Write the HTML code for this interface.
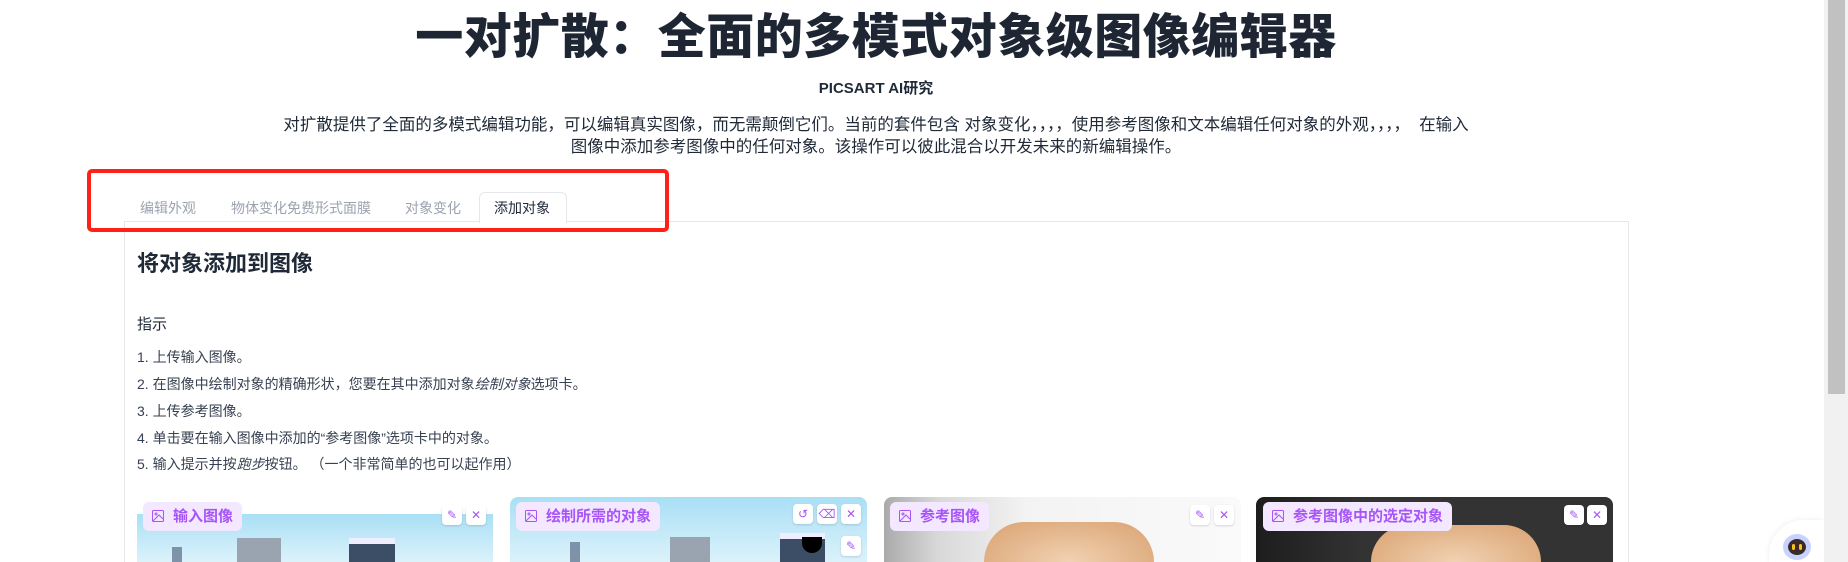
<!DOCTYPE html>
<html style="width:1848px;height:562px;overflow:hidden"><head><meta charset="utf-8"><style>
*{margin:0;padding:0;box-sizing:border-box}
body{width:1848px;height:562px;overflow:hidden;background:#fff;font-family:"Liberation Sans","Noto Sans CJK SC",sans-serif;position:relative;color:#1f2937}
.a{position:absolute;white-space:nowrap}
h1{position:absolute;left:0;width:1752px;top:8px;text-align:center;font-size:48px;font-weight:900;color:#1e2533;line-height:60px;letter-spacing:0.5px}
.sub{left:0;width:1752px;top:77px;text-align:center;font-size:15px;font-weight:700;color:#1f2937}
.desc{left:0;width:1752px;top:114px;text-align:center;font-size:16.5px;line-height:22px;color:#1f2937}
.red{position:absolute;left:87px;top:169px;width:582px;height:63px;border:4px solid #ff2117;border-radius:5px}
.tab{top:198px;font-size:14px;color:#9ca3af}
.act{position:absolute;left:479px;top:192px;width:88px;height:31px;border:1px solid #e5e7eb;border-bottom:none;border-radius:6px 6px 0 0;background:#fff}
.panel{position:absolute;left:124px;top:221px;width:1505px;height:341px;border:1px solid #e5e7eb;border-bottom:none}
.li{left:137px;font-size:14px;color:#374151}
.card{position:absolute;top:497px;width:357px;height:65px;border-radius:8px 8px 0 0;overflow:hidden}
.lab{position:absolute;top:502px;height:29px;background:#f3e8ff;border-radius:6px;color:#a855f7;font-size:15px;font-weight:700;line-height:29px;padding:0 9px 0 30px;white-space:nowrap}
.lab svg{position:absolute;left:9px;top:8px}
.btn{position:absolute;width:20px;height:20px;background:#fff;border-radius:4px;box-shadow:0 1px 2px rgba(0,0,0,.15);color:#a855f7;font-size:12px;text-align:center;line-height:20px}
</style></head><body>
<h1>一对扩散：全面的多模式对象级图像编辑器</h1>
<div class="a sub">PICSART AI研究</div>
<div class="a desc">对扩散提供了全面的多模式编辑功能，可以编辑真实图像，而无需颠倒它们。当前的套件包含 对象变化，，，，使用参考图像和文本编辑任何对象的外观，，，， &nbsp;在输入<br>图像中添加参考图像中的任何对象。该操作可以彼此混合以开发未来的新编辑操作。</div>
<div class="panel"></div>
<div class="act"></div>
<div class="a tab" style="left:140px">编辑外观</div>
<div class="a tab" style="left:231px">物体变化免费形式面膜</div>
<div class="a tab" style="left:405px">对象变化</div>
<div class="a tab" style="left:494px;color:#1f2937">添加对象</div>
<div class="red"></div>
<div class="a" style="left:137px;top:246px;font-size:22px;font-weight:700;color:#1f2937">将对象添加到图像</div>
<div class="a" style="left:137px;top:313px;font-size:15px;color:#1f2937">指示</div>
<div class="a li" style="top:347px">1. 上传输入图像。</div>
<div class="a li" style="top:374px">2. 在图像中绘制对象的精确形状，您要在其中添加对象<i>绘制对象</i>选项卡。</div>
<div class="a li" style="top:401px">3. 上传参考图像。</div>
<div class="a li" style="top:428px">4. 单击要在输入图像中添加的“参考图像”选项卡中的对象。</div>
<div class="a li" style="top:454px">5. 输入提示并按<i>跑步</i>按钮。 （一个非常简单的也可以起作用）</div>

<div class="card" style="left:137px;background:#fff"><div style="position:absolute;left:0;top:17px;width:356px;height:48px;background:linear-gradient(#a9dff5,#dcf2fb);overflow:hidden"><div style="position:absolute;left:100px;top:24px;width:44px;height:24px;background:#9aa4b0"></div><div style="position:absolute;left:212px;top:24px;width:46px;height:24px;background:#3b4e66;border-top:6px solid #eef"></div><div style="position:absolute;left:35px;top:33px;width:10px;height:15px;background:#7f93a8"></div></div></div>
<div class="card" style="left:510px;background:linear-gradient(#a9dff5,#dcf2fb)"><div style="position:absolute;left:160px;top:40px;width:40px;height:25px;background:#9aa4b0"></div><div style="position:absolute;left:270px;top:36px;width:45px;height:29px;background:#3b4e66;border-top:6px solid #eef"></div><div style="position:absolute;left:60px;top:45px;width:10px;height:20px;background:#7f93a8"></div><div style="position:absolute;left:292px;top:40px;width:20px;height:16px;background:#000;border-radius:0 0 10px 10px"></div></div>
<div class="card" style="left:884px;background:linear-gradient(90deg,#aaa 0%,#d8d8d8 15%,#f3f3f3 40%,#fafafa 100%)"><div style="position:absolute;left:100px;top:25px;width:170px;height:40px;border-radius:85px 85px 0 0;background:radial-gradient(ellipse at 50% 100%,#f1d2b2,#d9a170)"></div></div>
<div class="card" style="left:1256px;background:linear-gradient(90deg,#1d1d1d,#333 30%,#333)"><div style="position:absolute;left:115px;top:28px;width:170px;height:37px;border-radius:85px 85px 0 0;background:radial-gradient(ellipse at 50% 100%,#f1d2b2,#d9a170)"></div></div>

<div class="lab" style="left:143px"><svg width="12" height="12" viewBox="0 0 12 12" fill="none" stroke="#a855f7"><rect x=".5" y=".5" width="11" height="11" rx="1"/><circle cx="4" cy="4" r="1"/><path d="M1 11l6-6 4 4"/></svg>输入图像</div>
<div class="lab" style="left:516px"><svg width="12" height="12" viewBox="0 0 12 12" fill="none" stroke="#a855f7"><rect x=".5" y=".5" width="11" height="11" rx="1"/><circle cx="4" cy="4" r="1"/><path d="M1 11l6-6 4 4"/></svg>绘制所需的对象</div>
<div class="lab" style="left:890px"><svg width="12" height="12" viewBox="0 0 12 12" fill="none" stroke="#a855f7"><rect x=".5" y=".5" width="11" height="11" rx="1"/><circle cx="4" cy="4" r="1"/><path d="M1 11l6-6 4 4"/></svg>参考图像</div>
<div class="lab" style="left:1263px"><svg width="12" height="12" viewBox="0 0 12 12" fill="none" stroke="#a855f7"><rect x=".5" y=".5" width="11" height="11" rx="1"/><circle cx="4" cy="4" r="1"/><path d="M1 11l6-6 4 4"/></svg>参考图像中的选定对象</div>

<div class="btn" style="left:442px;top:505px">✎</div><div class="btn" style="left:466px;top:505px">✕</div>
<div class="btn" style="left:793px;top:504px">↺</div><div class="btn" style="left:817px;top:504px">⌫</div><div class="btn" style="left:841px;top:504px">✕</div><div class="btn" style="left:841px;top:536px">✎</div>
<div class="btn" style="left:1190px;top:505px">✎</div><div class="btn" style="left:1214px;top:505px">✕</div>
<div class="btn" style="left:1564px;top:505px">✎</div><div class="btn" style="left:1587px;top:505px">✕</div>

<div style="position:absolute;left:1769px;top:520px;width:55px;height:42px;border-radius:35px 0 0 0;background:#fff;box-shadow:0 0 6px rgba(0,0,0,.08)"></div>
<div style="position:absolute;left:1783px;top:534px;width:28px;height:26px;border-radius:50%;background:#c7d2fe"><div style="position:absolute;left:5px;top:5px;width:18px;height:16px;border-radius:50%;background:#3b2a2a"></div><div style="position:absolute;left:9px;top:10px;width:3px;height:6px;background:#fbbf24;border-radius:2px"></div><div style="position:absolute;left:16px;top:10px;width:3px;height:6px;background:#fbbf24;border-radius:2px"></div></div>
<div style="position:absolute;left:1824px;top:0;width:24px;height:562px;background:#f1f1f1"><div style="position:absolute;left:4px;top:0;width:17px;height:394px;background:#c1c1c1"></div></div>
</body></html>
